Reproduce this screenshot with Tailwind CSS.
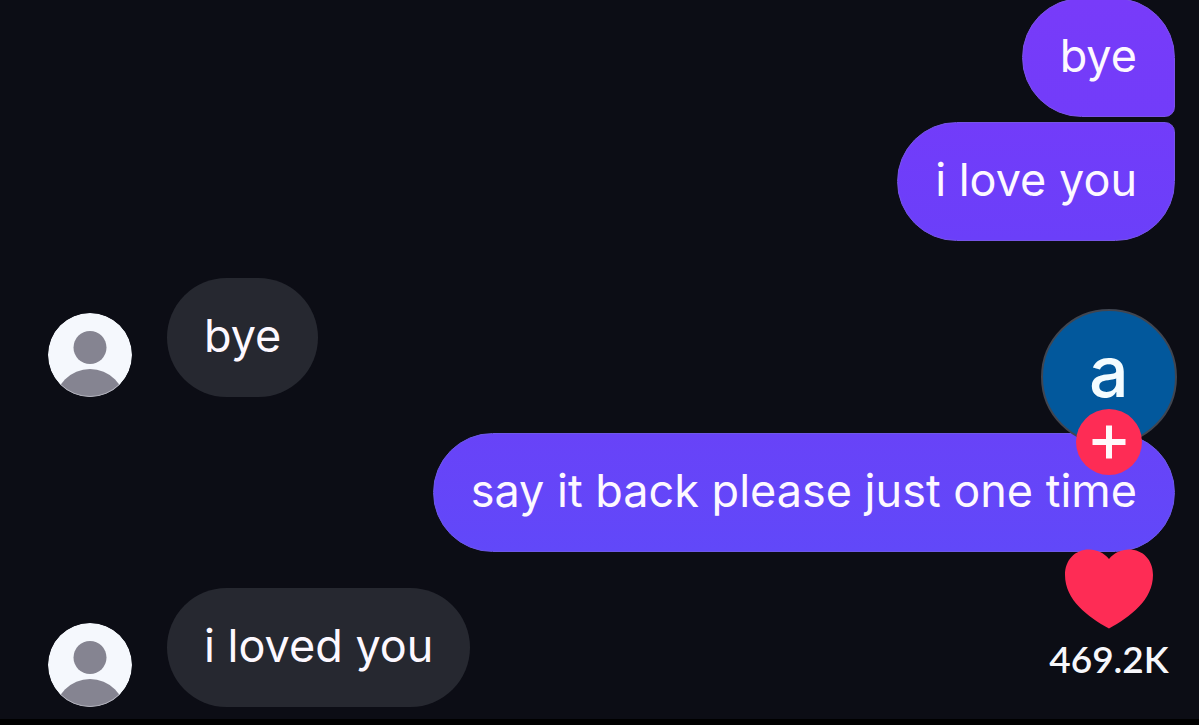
<!DOCTYPE html>
<html lang="en">
<head>
<meta charset="utf-8">
<meta name="viewport" content="width=device-width, initial-scale=1">
<title>Chat</title>
<script src="https://cdn.jsdelivr.net/npm/@tailwindcss/browser@4"></script>
</head>
<body class="relative overflow-x-hidden bg-[#0c0d15] font-[Inter,sans-serif] text-[45px] leading-[55px] text-[#fdf8ff]">
<svg class="hidden" aria-hidden="true">
  <symbol id="person" viewBox="0 0 84 84">
    <circle cx="42" cy="42" r="42" fill="#f5f8fd"/>
    <circle cx="42" cy="34.500" r="16.500" fill="#858491"/>
    <circle cx="42" cy="91.500" r="35.500" fill="#858491"/>
    <circle cx="42" cy="42" r="41.500" fill="none" stroke="#f5f8fd" stroke-opacity=".4"/>
  </symbol>
</svg>
<main class="-mt-0.5 flex flex-col pr-6 pb-3 pl-12">
  <p class="self-end rounded-[60px] rounded-br-[10px] border border-[#7c52e8] bg-linear-to-b from-[#783bf9] to-[#723cf9] px-[37px] pt-[29px] pb-[33px]">bye</p>
  <p class="mt-[5px] self-end rounded-[60px] rounded-tr-[10px] border border-[#7654e6] bg-linear-to-b from-[#723cfa] to-[#6b3ff9] px-[37px] pt-[29px] pb-[33px]">i love you</p>
  <div class="mt-[37px] flex items-end gap-[35px]">
    <svg class="size-[84px] shrink-0 overflow-hidden rounded-full" role="img" aria-label="Profile picture"><use href="#person"/></svg>
    <p class="rounded-[60px] bg-[#262830] px-[37px] pt-[30px] pb-[34px]">bye</p>
  </div>
  <p class="mt-9 self-end rounded-[60px] border border-[#6d58e8] bg-linear-to-b from-[#6843f8] to-[#6148f9] px-[37px] pt-[29px] pb-[33px]">say it back please just one time</p>
  <div class="mt-9 flex items-end gap-[35px]">
    <svg class="size-[84px] shrink-0 overflow-hidden rounded-full" role="img" aria-label="Profile picture"><use href="#person"/></svg>
    <p class="rounded-[60px] bg-[#262830] px-[37px] pt-[30px] pb-[34px]">i loved you</p>
  </div>
</main>
<footer class="h-1.5 bg-black"></footer>

<aside class="absolute top-[309px] right-[22px] flex w-[136px] flex-col items-center">
  <a href="#profile" class="flex size-[136px] items-center justify-center rounded-full border-2 border-[#414651] bg-[#02589c] pb-3 text-[70px] font-medium text-[#f4fcff]">a</a>
  <button type="button" aria-label="Follow" class="-mt-9 flex size-[66px] items-center justify-center rounded-full bg-[#fe2c55]">
    <svg class="size-9" viewBox="0 0 36 36" fill="none" stroke="#fff7fa" stroke-width="6"><path d="M18 1.500V34.500M1.500 18H34.500"/></svg>
  </button>
  <button type="button" class="mt-[74px] flex flex-col items-center gap-1.5 font-[Lato,sans-serif] text-[37px] leading-[48px] font-semibold text-[#f7f7fb]">
    <svg class="h-20 w-[88px]" viewBox="0 0 88 80" fill="#fe2c55" aria-hidden="true"><path d="M44 10C49 4 56 .5 64 .5C78 .5 88 11 88 26C88 51 65 68 44 79.500C23 68 0 51 0 26C0 11 10 .5 24 .5C32 .5 39 4 44 10Z"/></svg>
    469.2K
  </button>
</aside>
</body>
</html>
